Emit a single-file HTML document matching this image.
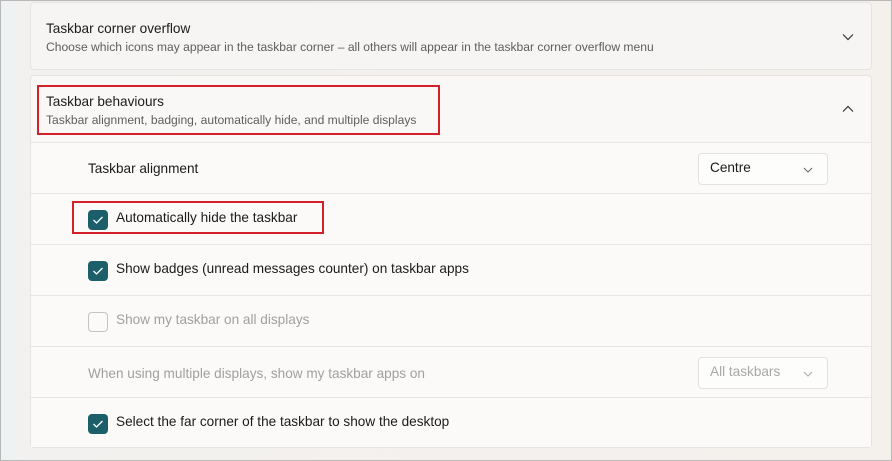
<!DOCTYPE html>
<html><head><style>
*{margin:0;padding:0;box-sizing:border-box}
body{width:892px;height:461px;overflow:hidden;font-family:"Liberation Sans",sans-serif;background:linear-gradient(90deg,#eef2f4 0,#f3f1ef 30px,#f4f0ec 100%);position:relative;border:1px solid #b8b8b8}
.card{position:absolute;left:29px;width:842px;background:#f9f8f7;border:1px solid #e6e4e2;border-radius:4px}
.t{position:absolute;font-size:13.6px;color:#1b1b1b;white-space:nowrap}
.s{position:absolute;font-size:12.1px;color:#5e5e5e;white-space:nowrap}
.row{position:absolute;left:0;width:840px;border-top:1px solid #e8e6e4;height:51px;background:#fbfaf9}
.cb{position:absolute;left:57px;width:20px;height:20px;border-radius:4px;background:#1c5f6b}
.cb svg{position:absolute;left:4px;top:5px}
.cbe{position:absolute;left:57px;width:20px;height:20px;border-radius:4px;border:1px solid #c4c4c4;background:#fbfaf9}
.dd{position:absolute;left:667px;width:130px;height:32px;border:1px solid #e3e1df;border-radius:4px;background:#fdfdfc}
.red{position:absolute;border:2px solid #d3202a}
</style></head><body>
<div class="card" style="top:1px;height:68px;background:#f6f5f3">
<div class="t" style="left:15px;top:18px">Taskbar corner overflow</div>
<div class="s" style="left:15px;top:37px">Choose which icons may appear in the taskbar corner – all others will appear in the taskbar corner overflow menu</div>
<svg style="position:absolute;left:811px;top:30px" width="12" height="8"><path d="M1 1.5L6 6.5L11 1.5" stroke="#333" fill="none" stroke-width="1.2"/></svg>
</div>
<div class="card" style="top:74px;height:373px">
<div class="t" style="left:15px;top:18px">Taskbar behaviours</div>
<div class="s" style="left:15px;top:37px">Taskbar alignment, badging, automatically hide, and multiple displays</div>
<svg style="position:absolute;left:811px;top:29px" width="12" height="8"><path d="M1 6.5L6 1.5L11 6.5" stroke="#333" fill="none" stroke-width="1.2"/></svg>
<div class="row" style="top:66px">
<div class="t" style="left:57px;top:18px">Taskbar alignment</div>
<div class="dd" style="top:10px"><span class="t" style="left:11px;top:6px">Centre</span>
<svg style="position:absolute;left:104px;top:13px" width="10" height="6"><path d="M1 1L5 5L9 1" stroke="#666" fill="none"/></svg></div>
</div>
<div class="row" style="top:117px">
<div class="cb" style="top:16px"><svg width="12" height="10"><path d="M1.5 5L4.5 8L10.5 2" stroke="#fff" fill="none" stroke-width="1.3"/></svg></div>
<div class="t" style="left:85px;top:16px">Automatically hide the taskbar</div>
</div>
<div class="row" style="top:168px">
<div class="cb" style="top:16px"><svg width="12" height="10"><path d="M1.5 5L4.5 8L10.5 2" stroke="#fff" fill="none" stroke-width="1.3"/></svg></div>
<div class="t" style="left:85px;top:16px">Show badges (unread messages counter) on taskbar apps</div>
</div>
<div class="row" style="top:219px">
<div class="cbe" style="top:16px"></div>
<div class="t" style="left:85px;top:16px;color:#a0a0a0">Show my taskbar on all displays</div>
</div>
<div class="row" style="top:270px">
<div class="t" style="left:57px;top:19px;color:#a0a0a0">When using multiple displays, show my taskbar apps on</div>
<div class="dd" style="top:10px"><span class="t" style="left:11px;top:6px;color:#a8a8a8">All taskbars</span>
<svg style="position:absolute;left:104px;top:13px" width="10" height="6"><path d="M1 1L5 5L9 1" stroke="#aaa" fill="none"/></svg></div>
</div>
<div class="row" style="top:321px;height:50px">
<div class="cb" style="top:16px"><svg width="12" height="10"><path d="M1.5 5L4.5 8L10.5 2" stroke="#fff" fill="none" stroke-width="1.3"/></svg></div>
<div class="t" style="left:85px;top:16px">Select the far corner of the taskbar to show the desktop</div>
</div>
</div>
<div class="red" style="left:36px;top:84px;width:403px;height:50px"></div>
<div class="red" style="left:71px;top:200px;width:252px;height:33px"></div>
</body></html>
